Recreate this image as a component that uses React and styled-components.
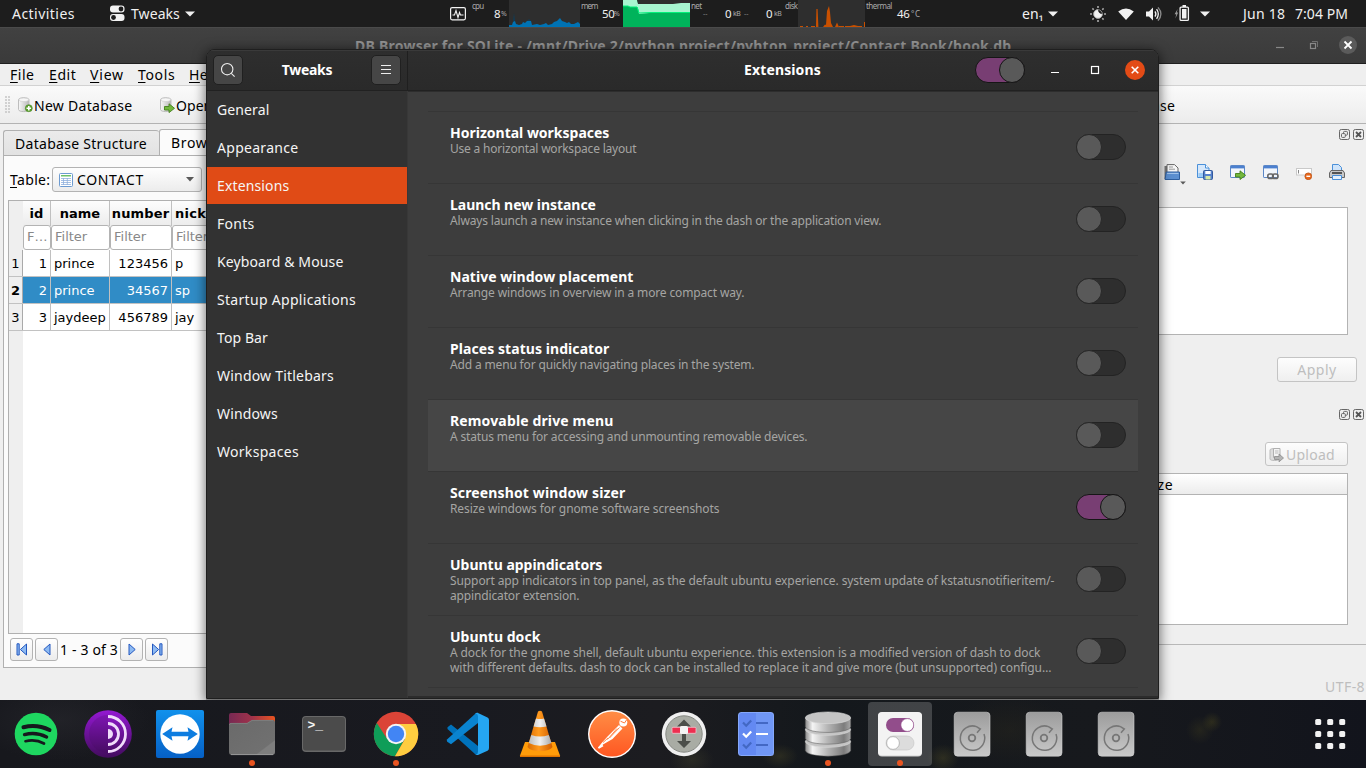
import React, { useLayoutEffect, useRef, useState } from "react";
import styled, { createGlobalStyle, css } from "styled-components";

const UI = '"Noto Sans", "Open Sans", sans-serif';
const GRID = '"DejaVu Sans", sans-serif';

const GlobalStyle = createGlobalStyle`
  *, *::before, *::after { box-sizing: border-box; }
  html, body { margin: 0; padding: 0; background: #16181d; }
  body { font-family: ${UI}; font-size: 14px; overflow: hidden; }
  svg { display: block; flex: none; }
`;

/* Text that is tracked so that it fills a given width. */
const FitSpan = styled.span`
  display: inline-block;
  width: max-content;
  white-space: pre;
  flex: none;
  font-size: ${(p) => p.$size || 14}px;
  font-weight: ${(p) => (p.$bold ? 700 : 400)};
  color: ${(p) => p.$color || "inherit"};
  u { text-decoration-thickness: 1px; text-underline-offset: 2px; text-decoration-skip-ink: none; }
`;

function Fit({ w, size, bold, color, children }) {
  const ref = useRef(null);
  const [track, setTrack] = useState(0);
  useLayoutEffect(() => {
    const el = ref.current;
    el.style.letterSpacing = "0px";
    const natural = el.getBoundingClientRect().width;
    const next = (w + 0.4 - natural) / el.textContent.length;
    el.style.letterSpacing = `${next}px`;
    setTrack(next);
  }, [w]);
  return (
    <FitSpan ref={ref} $size={size} $bold={bold} $color={color} style={{ letterSpacing: track }}>
      {children}
    </FitSpan>
  );
}

const Desktop = styled.div`
  position: relative;
  width: 1366px;
  height: 768px;
  overflow: hidden;
  display: flex;
  flex-direction: column;
`;

/* ---------- top bar ---------- */
const TopBar = styled.header`
  height: 27px;
  flex: none;
  display: flex;
  background: #1d1d1d;
  color: #f0f0f0;
`;
const Slot = styled.div`
  width: ${(p) => p.$w}px;
  flex: none;
  height: 27px;
  display: flex;
  align-items: ${(p) => (p.$top ? "flex-start" : "center")};
  line-height: ${(p) => (p.$top ? 12 : 26)}px;
  white-space: nowrap;
`;
const Caret = () => (
  <svg width="10" height="6" viewBox="0 0 10 6"><path d="M0 .5h10L5 5.5z" fill="#f0f0f0" /></svg>
);

const TweaksGlyph = () => (
  <svg width="15" height="17" viewBox="0 0 15 17">
    <rect x="0" y="0.5" width="14.5" height="7" rx="3" fill="#f2f2f2" />
    <circle cx="11" cy="4" r="2.4" fill="#1d1d1d" />
    <rect x="0" y="9" width="14.5" height="7" rx="3" fill="#f2f2f2" />
    <circle cx="3.5" cy="12.5" r="2.4" fill="#1d1d1d" />
  </svg>
);
const MonitorGlyph = () => (
  <svg width="16" height="14" viewBox="0 0 16 14" fill="none" stroke="#f2f2f2">
    <rect x=".6" y=".6" width="14.8" height="12.2" rx="1.5" strokeWidth="1.2" />
    <path d="M2.5 8H4.5L6 3.5 8 10.5 9.5 5.5 10.5 8H13.5" strokeWidth="1.1" />
  </svg>
);
const CpuGraph = () => (
  <svg width="71" height="27" viewBox="0 0 71 27">
    <path d="M0 0H71V27H0z" fill="#2e2e2e" />
    <path d="M4 27V20L5 13 6 20V27zM18 21L20 19 22 21z" fill="#153a50" />
    <path d="M0 27V25H3L4 22 6 21 7 24 10 25 13 24 14 22 16 23 18 21H22L23 25 28 24 31 25 35 24 37 23 39 25 43 24 45 22 48 21 50 19 51 18 53 21 56 22 58 23 60 22 62 24 65 24 67 23 69 22 71 24V27z" fill="#0072b3" />
  </svg>
);
const MemGraph = () => (
  <svg width="67" height="27" viewBox="0 0 67 27">
    <path d="M0 0H67V27H0z" fill="#00b35b" />
    <path d="M0 0H14L15 3H17L67 3V13H26L16 14 15 8 14 7H7L5 6H0z" fill="#a7f5d0" />
    <path d="M14 0H67V3H58L50 4H18L15 4z" fill="#2e2e2e" />
    <path d="M0 6H5L7 7H14L16 13 28 12.5H67" fill="none" stroke="#00f27a" />
  </svg>
);
const DiskGraph = () => (
  <svg width="67" height="27" viewBox="0 0 67 27">
    <path d="M0 0H67V27H0z" fill="#2e2e2e" />
    <path d="M2 27V26H5V27zM8 27V26H10V27zM13 27V26H17V27zM18 27L18.4 9 19.6 9 20.4 27zM25 27L27 24.5 28 25 29 11 31 6 32 12 33 23 35 27zM37 27L39 22.5 41 27zM41 27V26H46V27zM47 27V26H52L56 25 60 26H64V27zM66 27V22H67V27z" fill="#c95000" />
  </svg>
);
const NightGlyph = () => (
  <svg width="16" height="16" viewBox="0 0 16 16">
    <path d="M8 3.5A4.5 4.5 0 1 0 12.5 8 4.2 4.2 0 0 1 8 3.5z" fill="#f2f2f2" />
    <circle cx="8" cy="8" r="4.3" fill="none" stroke="#aaa" strokeWidth=".8" />
    <path d="M8 0v2M8 14v2M0 8h2M14 8h2M2.4 2.4l1.3 1.3M12.3 12.3l1.3 1.3M13.6 2.4l-1.3 1.3M3.7 12.3l-1.3 1.3" stroke="#aaa" strokeWidth="1.6" />
  </svg>
);
const WifiGlyph = () => (
  <svg width="16" height="12" viewBox="0 0 16 12"><path d="M.2 3.4Q8-2.6 15.8 3.4L8 12z" fill="#f2f2f2" /></svg>
);
const SoundGlyph = () => (
  <svg width="16" height="14" viewBox="0 0 16 14" fill="none" stroke="#f2f2f2" strokeWidth="1.3">
    <path d="M0 4.5H3L7 .5V13.5L3 9.5H0z" fill="#f2f2f2" stroke="none" />
    <path d="M9 4.3Q10.8 7 9 9.7M10.6 2.2Q14 7 10.6 11.8" />
    <path d="M12 .4Q17.8 7 12 13.6" stroke="#8a8a8a" />
  </svg>
);
const BatteryGlyph = () => (
  <svg width="16" height="17" viewBox="0 0 16 17">
    <path d="M3.6 4L.6 9.2H2.2L1.4 13.4 4.2 7.6H2.8z" fill="#9a9a9a" />
    <path d="M8.5 0h3.5v2H8.5z" fill="#f2f2f2" />
    <rect x="6.1" y="2.1" width="8.3" height="13.3" rx="1" fill="none" stroke="#f2f2f2" strokeWidth="1.3" />
    <path d="M8 4h4.5v9.5H8z" fill="#f2f2f2" />
  </svg>
);

const Shell = () => (
  <TopBar>
    <Slot $w={12} />
    <Slot $w={98}><Fit w={62.5}>Activities</Fit></Slot>
    <Slot $w={21}><TweaksGlyph /></Slot>
    <Slot $w={54}><Fit w={48.5}>Tweaks</Fit></Slot>
    <Slot $w={265}><Caret /></Slot>
    <Slot $w={22}><MonitorGlyph /></Slot>
    <Slot $w={22} $top><Fit w={11} size={8} color="#aaa">cpu</Fit></Slot>
    <Slot $w={7}><Fit w={6} size={11.5}>8</Fit></Slot>
    <Slot $w={8}><Fit w={5} size={7} color="#aaa">%</Fit></Slot>
    <Slot $w={72}><CpuGraph /></Slot>
    <Slot $w={21} $top><Fit w={16} size={8} color="#aaa">mem</Fit></Slot>
    <Slot $w={12}><Fit w={12} size={11.5}>50</Fit></Slot>
    <Slot $w={9}><Fit w={5} size={7} color="#aaa">%</Fit></Slot>
    <Slot $w={68}><MemGraph /></Slot>
    <Slot $w={12} $top><Fit w={10} size={8} color="#aaa">net</Fit></Slot>
    <Slot $w={22}><Fit w={4} size={7} color="#888">--</Fit></Slot>
    <Slot $w={8}><Fit w={6} size={11.5}>0</Fit></Slot>
    <Slot $w={11}><Fit w={7} size={7} color="#aaa">kB</Fit></Slot>
    <Slot $w={22}><Fit w={4} size={7} color="#888">--</Fit></Slot>
    <Slot $w={8}><Fit w={6} size={11.5}>0</Fit></Slot>
    <Slot $w={11}><Fit w={7} size={7} color="#aaa">kB</Fit></Slot>
    <Slot $w={13} $top><Fit w={12} size={8} color="#aaa">disk</Fit></Slot>
    <Slot $w={68}><DiskGraph /></Slot>
    <Slot $w={31} $top><Fit w={25.5} size={8} color="#aaa">thermal</Fit></Slot>
    <Slot $w={14}><Fit w={12} size={11.5}>46</Fit></Slot>
    <Slot $w={111}><Fit w={9} size={8} color="#aaa">°C</Fit></Slot>
    <Slot $w={26}><Fit w={21}>en₁</Fit></Slot>
    <Slot $w={42}><Caret /></Slot>
    <Slot $w={28}><NightGlyph /></Slot>
    <Slot $w={28}><WifiGlyph /></Slot>
    <Slot $w={28}><SoundGlyph /></Slot>
    <Slot $w={26}><BatteryGlyph /></Slot>
    <Slot $w={43}><Caret /></Slot>
    <Slot $w={52}><Fit w={42}>Jun 18</Fit></Slot>
    <Slot $w={54}><Fit w={52.5}>7:04 PM</Fit></Slot>
  </TopBar>
);

/* ---------- database browser ---------- */
const DbWindow = styled.section`
  height: 673px;
  flex: none;
  display: flex;
  flex-direction: column;
  background: #efefef;
  color: #000;
`;
const DbTitle = styled.div`
  height: 37px;
  flex: none;
  display: flex;
  align-items: center;
  border-top: 1px solid #4a4a4a;
  border-bottom: 1px solid #1f1f1f;
  background: linear-gradient(#414141, #3a3a3a);
  padding-left: 355px;
`;
const DbControls = styled.div`
  margin: -2px 0 0 auto;
  display: flex;
  align-items: center;
  padding-right: 9px;
`;
const MenuBar = styled.nav`
  height: 22px;
  flex: none;
  display: flex;
  border-bottom: 1px solid #d2d2d2;
  padding-left: 10px;
  line-height: 22px;
`;
const MenuItem = styled.div`
  width: ${(p) => p.$w}px;
  flex: none;
`;
const ToolBar = styled.div`
  height: 38px;
  flex: none;
  display: flex;
  align-items: center;
  border-bottom: 1px solid #b3b3b3;
  background: linear-gradient(#fafafa, #ececec);
`;
const Handle = styled.i`
  width: 5px;
  height: 17px;
  margin: 0 8px 0 5px;
  background: radial-gradient(circle at 1px 1px, #c4c4c4 0.6px, transparent 1px) 0 0 / 3px 3px;
`;
const ToolButton = styled.div`
  display: flex;
  align-items: center;
  gap: 1px;
  width: ${(p) => p.$w}px;
  padding-top: 1px;
`;
const LastTool = styled(ToolButton)`
  width: 896px;
  justify-content: flex-end;
`;
const Body = styled.div`
  height: 544px;
  flex: none;
  display: flex;
`;
const LeftPane = styled.div`
  width: 900px;
  flex: none;
  padding: 5px 0 0 3px;
  display: flex;
  flex-direction: column;
`;
const Tabs = styled.div`
  height: 27px;
  flex: none;
  display: flex;
  align-items: flex-end;
`;
const Tab = styled.div`
  height: ${(p) => (p.$active ? 27 : 26)}px;
  width: ${(p) => (p.$active ? 120 : 156)}px;
  border: 1px solid #b0b0b0;
  border-radius: 3px 3px 0 0;
  ${(p) => p.$active ? css`border-bottom-color: #fbfbfb; background: #fbfbfb;` : css`background: linear-gradient(#ebebeb, #e2e2e2); border-right: 0;`}
  padding: 0 0 0 11px;
  line-height: ${(p) => (p.$active ? 25 : 26)}px;
`;
const Panel = styled.div`
  height: 513px;
  margin-top: -1px;
  border: 1px solid #b0b0b0;
  background: #fbfbfb;
  padding: 11px 0 0 4px;
`;
const PickRow = styled.div`
  display: flex;
  align-items: center;
  height: 25px;
  padding-left: 2px;
  line-height: 20px;
`;
const Combo = styled.div`
  width: 150px;
  height: 25px;
  margin-left: 1.6px;
  border: 1px solid #b3b3b3;
  border-radius: 3px;
  background: linear-gradient(#fefefe, #ececec);
  display: flex;
  align-items: center;
  padding: 0 7px 0 6px;
  gap: 4px;
  svg:last-child { margin-left: auto; }
`;
const Grid = styled.div`
  margin-top: 8px;
  height: 434px;
  border: 1px solid #b0b0b0;
  background: linear-gradient(90deg, #efefef 14px, #fff 14px);
  font-family: ${GRID};
  font-size: 13px;
`;
const GridRow = styled.div`
  display: flex;
  height: ${(p) => p.$h}px;
  background: ${(p) => (p.$selected ? "#308cc6" : "#fff")};
  color: ${(p) => (p.$selected ? "#fff" : "#000")};
  ${(p) => p.$head && css`background: linear-gradient(#fdfdfd, #ececec); font-weight: 700;`}
  ${(p) => p.$line && css`border-bottom: 1px solid #c2c2c2;`}
`;
const Cell = styled.div`
  width: ${(p) => p.$w}px;
  flex: none;
  border-right: 1px solid #c0c0c0;
  display: flex;
  align-items: center;
  justify-content: ${(p) => p.$align || "flex-start"};
  padding: ${(p) => (p.$align === "center" ? "0" : "1px 3px 0")};
  white-space: nowrap;
`;
const LooseCell = styled(Cell)`
  padding-top: 0;
  letter-spacing: 0.3px;
`;
const RowHead = styled(Cell)`
  width: 14px;
  justify-content: center;
  padding: 1px 0 0;
  color: #000;
  background: #efefef;
  font-weight: ${(p) => (p.$bold ? 700 : 400)};
  border-right-color: ${(p) => (p.$plain ? "#efefef" : "#aaa")};
`;
const Filter = styled.div`
  width: ${(p) => p.$w}px;
  flex: none;
  height: 25px;
  margin-top: -1px;
  border: 1px solid #b3b3b3;
  border-radius: 3px;
  background: #fff;
  color: #888;
  padding-left: 3px;
  line-height: 22px;
`;
const Pager = styled.div`
  display: flex;
  align-items: center;
  gap: 2px;
  margin-top: 4px;
  padding-left: 2px;
`;
const PageButton = styled.button`
  width: 23px;
  height: 23px;
  padding: 0;
  border: 1px solid #b3b3b3;
  border-radius: 3px;
  background: linear-gradient(#fff, #ececec);
  display: grid;
  place-items: center;
`;
const RightPane = styled.div`
  width: 466px;
  display: flex;
  flex-direction: column;
`;
const DockTitle = styled.div`
  display: flex;
  justify-content: flex-end;
  gap: 3px;
  padding-right: 2px;
  margin-top: ${(p) => p.$mt}px;
`;
const IconRow = styled.div`
  display: flex;
  justify-content: flex-end;
  gap: 17px;
  padding-right: 21px;
  margin-top: 24px;
  height: 16px;
`;
const EditArea = styled.div`
  margin: 27px 18px 0 0;
  height: 128px;
  border: 1px solid #b3b3b3;
  background: #fff;
`;
const SoftButton = styled.div`
  align-self: flex-end;
  width: ${(p) => p.$w}px;
  height: ${(p) => p.$h}px;
  margin: 22px ${(p) => p.$mr}px 0 0;
  border: 1px solid #c4c4c4;
  border-radius: 3px;
  background: linear-gradient(#fdfdfd, #efefef);
  display: flex;
  align-items: center;
  justify-content: ${(p) => p.$justify || "center"};
  gap: 2px;
  padding: 1px 0 0 ${(p) => (p.$justify ? 3 : 0)}px;
  line-height: 20px;
  color: #bebebe;
`;
const RemoteTable = styled.div`
  margin: 7px 18px 0 0;
  height: 152px;
  border: 1px solid #b3b3b3;
  background: #fff;
`;
const RemoteHead = styled.div`
  height: 21px;
  border-bottom: 1px solid #b3b3b3;
  background: linear-gradient(#fff, #ececec);
  padding-left: 244px;
  line-height: 21px;
`;
const Rule = styled.div`
  margin-top: 19px;
  height: 1px;
  background: #b8b8b8;
`;
const Status = styled.div`
  height: 32px;
  display: flex;
  justify-content: flex-end;
  align-items: center;
  padding: 5px 1px 0 0;
  color: #bebebe;
`;

const Cyl = ({ add }) => (
  <svg width="15" height="16" viewBox="0 0 15 16">
    <defs>
      <linearGradient id="cyl"><stop offset="0" stopColor="#f8f8f8" /><stop offset="1" stopColor="#b8b8b8" /></linearGradient>
    </defs>
    <path d="M.5 2.8C.5 0 11 0 11 2.8V12.5C11 15.3.5 15.3.5 12.5z" fill="url(#cyl)" stroke="#bdbdbd" />
    <ellipse cx="5.8" cy="2.8" rx="4.8" ry="1.8" fill="#f6f6f6" stroke="#ccc" strokeWidth=".6" />
    {add ? (
      <g><circle cx="10.8" cy="11.2" r="3.5" fill="#5aa02c" stroke="#4d8a2a" strokeWidth=".6" /><path d="M10.8 8.9v4.6M8.5 11.2h4.6" stroke="#fff" strokeWidth="1.6" /></g>
    ) : (
      <path d="M4.5 9.5H9V6.8L14.5 11.3 9 15.6V13H4.5z" fill="#73b83e" stroke="#43801c" strokeWidth=".9" />
    )}
  </svg>
);
const TableGlyph = () => (
  <svg width="14" height="14" viewBox="0 0 14 14">
    <rect x=".5" y=".5" width="13" height="13" rx="1" fill="#fff" stroke="#6d9bd1" />
    <path d="M2 2h10v1.5H2z" fill="#6cc06c" />
    <path d="M2 5.5h10M2 7.5h10M2 9.5h10M2 11.5h10M4.5 5v7M8.3 5v7" stroke="#8fb0dd" strokeWidth=".8" />
  </svg>
);
const SmallCaret = () => (
  <svg width="8" height="5" viewBox="0 0 8 5"><path d="M0 0h8L4 4.6z" fill="#5a5a5a" /></svg>
);
const PageGlyph = ({ flip, bar }) => (
  <svg width="12" height="13" viewBox="0 0 12 13">
    <g transform={flip ? "translate(12 0) scale(-1 1)" : undefined} fill="#8dbaf2" stroke="#2458c0">
      {bar ? <path d="M1 .8H3.2V12H1zM10.5 1V12L4.4 6.5z" /> : <path d="M9 1V12L2.8 6.5z" />}
    </g>
  </svg>
);
const FloatGlyph = () => (
  <svg width="11" height="11" viewBox="0 0 11 11" fill="none" stroke="#666">
    <rect x=".5" y=".5" width="10" height="10" rx="1.8" />
    <rect x="4.6" y="2.4" width="3.8" height="3.8" rx=".8" /><rect x="2.5" y="4.6" width="3.8" height="3.8" rx=".8" fill="#efefef" />
  </svg>
);
const CloseGlyph = () => (
  <svg width="11" height="11" viewBox="0 0 11 11" fill="none" stroke="#666">
    <rect x=".5" y=".5" width="10" height="10" rx="1.8" />
    <path d="M3 3L8 8M8 3L3 8" strokeWidth="1.8" stroke="#555" />
  </svg>
);
/* The drop-down mark hangs below the icon's own box. */
const Hanging = styled.svg`
  overflow: visible;
`;
const ImportIcon = () => (
  <Hanging width="16" height="16" viewBox="0 0 16 16">
    <path d="M.5 2H3V15H.5z" fill="#777" />
    <path d="M3 .6H10.5L14 4V9H3z" fill="#f7f7f7" stroke="#666" />
    <path d="M5 3h4M5 5.2h6" stroke="#999" />
    <path d="M2.2 8H15.5V15.5H1z" fill="#5b8fd0" stroke="#2f5f9e" />
    <path d="M3 9.4H14.5" stroke="#a9c9ee" />
    <path d="M16.2 17.5H21.8L19 20.5z" fill="#5a5a5a" />
  </Hanging>
);
const SaveIcon = () => (
  <svg width="16" height="16" viewBox="0 0 16 16">
    <path d="M.5 .5H8.5L12 4V13.5H.5z" fill="#d6e8fb" stroke="#4a90d9" />
    <path d="M8.5 .5V4H12" fill="#fff" stroke="#4a90d9" />
    <path d="M1.5 10h5M1.5 12h5" stroke="#62aef0" />
    <rect x="6.5" y="6.5" width="9" height="9" rx="1" fill="#5682cc" stroke="#33599c" />
    <path d="M8.3 7h5.4v3H8.3z" fill="#fff" /><path d="M8.5 12h5v3.5h-5z" fill="#d6e9a5" />
  </svg>
);
const WindowIcon = ({ link }) => (
  <svg width="16" height="16" viewBox="0 0 16 16">
    <rect x=".5" y="1.5" width="14" height="12" rx=".6" fill="#f2f6fc" stroke="#5b87c7" />
    <path d="M1 2h13v2.4H1z" fill="#4c80cf" />
    {link ? (
      <g fill="none" stroke="#666" strokeWidth="1.6"><rect x="4.8" y="10" width="5.4" height="4.4" rx="2" /><rect x="9.6" y="10" width="5.4" height="4.4" rx="2" /></g>
    ) : (
      <path d="M5.5 9.5H10V6.8L15.6 11.3 10 15.5V13H5.5z" fill="#73b83e" stroke="#43801c" strokeWidth=".9" />
    )}
  </svg>
);
const NullIcon = () => (
  <svg width="16" height="16" viewBox="0 0 16 16">
    <rect x=".5" y="4.5" width="15" height="6.5" fill="#fff" stroke="#c9c9c9" /><path d="M2.5 6v3.5" stroke="#888" />
    <circle cx="12.3" cy="12.3" r="3.4" fill="#e8681c" stroke="#b84a0c" strokeWidth=".7" /><path d="M10.4 12.3h3.8" stroke="#fff" strokeWidth="1.4" />
  </svg>
);
const PrintIcon = () => (
  <svg width="16" height="16" viewBox="0 0 16 16">
    <path d="M3.5 8V.5H9.5L12.5 3.5V8z" fill="#cfe4fa" stroke="#4a90d9" />
    <path d="M2 6.5H14L15.5 9V13.5H.5V9z" fill="#c8c8c8" stroke="#666" />
    <path d="M3 8h10v2H3z" fill="#555" />
    <path d="M3.5 11.5h9v4h-9z" fill="#e5f1fd" stroke="#4a90d9" />
  </svg>
);
const UploadIcon = () => (
  <svg width="15" height="15" viewBox="0 0 15 15">
    <path d="M1 3C1 1 10 1 10 3V12C10 14 1 14 1 12z" fill="#ddd" stroke="#bbb" />
    <path d="M4.5 1.5h6.5v9H4.5z" fill="#f4f4f4" stroke="#b0b0b0" /><path d="M6 4h3.5M6 6h3.5" stroke="#bbb" />
    <path d="M5.5 9.5H10V7L14.5 11 10 14.8V12.5H5.5z" fill="#b4b4b4" stroke="#8c8c8c" strokeWidth=".8" />
  </svg>
);
const DbMin = () => (
  <svg width="64" height="20" viewBox="0 0 64 20" fill="none" stroke="#888">
    <path d="M1 12.5H9" strokeWidth="1.2" />
    <rect x="35.5" y="8.5" width="5" height="5" strokeWidth="1.2" /><path d="M37 6.5H42.5V12" stroke="#707070" />
  </svg>
);
const DbClose = () => (
  <svg width="18" height="18" viewBox="0 0 18 18"><circle cx="9" cy="9" r="9" fill="#5b5b5b" /><path d="M5.5 5.5l7 7M12.5 5.5l-7 7" stroke="#fff" strokeWidth="1.8" /></svg>
);

const records = [
  { n: "1", id: "1", name: "prince", number: "123456", nick: "p" },
  { n: "2", id: "2", name: "prince", number: "34567", nick: "sp", selected: true },
  { n: "3", id: "3", name: "jaydeep", number: "456789", nick: "jay" },
];

const DbBrowser = () => (
  <DbWindow>
    <DbTitle>
      <Fit w={656} bold color="#949494">DB Browser for SQLite - /mnt/Drive 2/python project/pyhton_project/Contact Book/book.db</Fit>
      <DbControls><DbMin /><DbClose /></DbControls>
    </DbTitle>
    <MenuBar>
      <MenuItem $w={39}><Fit w={24}><u>F</u>ile</Fit></MenuItem>
      <MenuItem $w={41}><Fit w={27}><u>E</u>dit</Fit></MenuItem>
      <MenuItem $w={48}><Fit w={33.5}><u>V</u>iew</Fit></MenuItem>
      <MenuItem $w={51}><Fit w={37}><u>T</u>ools</Fit></MenuItem>
      <MenuItem $w={51}><Fit w={32}><u>H</u>elp</Fit></MenuItem>
    </MenuBar>
    <ToolBar>
      <Handle />
      <ToolButton $w={142}><Cyl add /><Fit w={98}>New Database</Fit></ToolButton>
      <ToolButton $w={119}><Cyl /><Fit w={102}>Open Database</Fit></ToolButton>
      <LastTool><Fit w={103}>Close Database</Fit></LastTool>
    </ToolBar>
    <Body>
      <LeftPane>
        <Tabs>
          <Tab><Fit w={131.5}>Database Structure</Fit></Tab>
          <Tab $active><Fit w={90}>Browse Data</Fit></Tab>
        </Tabs>
        <Panel>
          <PickRow>
            <Fit w={40}><u>T</u>able:</Fit>
            <Combo><TableGlyph /><Fit w={66.5}>CONTACT</Fit><SmallCaret /></Combo>
          </PickRow>
          <Grid>
            <GridRow $h={25} $head>
              <RowHead $plain />
              <Cell $w={28} $align="center">id</Cell>
              <Cell $w={59} $align="center">name</Cell>
              <Cell $w={62} $align="center"><Fit w={57} size={13} bold>number</Fit></Cell>
              <LooseCell $w={90}>nickname</LooseCell>
            </GridRow>
            <GridRow $h={24}>
              <RowHead $plain />
              <Filter $w={28}>F…</Filter>
              <Filter $w={59}>Filter</Filter>
              <Filter $w={62}>Filter</Filter>
              <Filter $w={90}>Filter</Filter>
            </GridRow>
            {records.map((r) => (
              <GridRow key={r.n} $h={27} $line $selected={r.selected}>
                <RowHead $bold={r.selected}>{r.n}</RowHead>
                <Cell $w={28} $align="flex-end">{r.id}</Cell>
                <Cell $w={59}>{r.name}</Cell>
                <Cell $w={62} $align="flex-end">{r.number}</Cell>
                <Cell $w={90}>{r.nick}</Cell>
              </GridRow>
            ))}
          </Grid>
          <Pager>
            <PageButton><PageGlyph bar /></PageButton>
            <PageButton><PageGlyph /></PageButton>
            <Fit w={57.6}>1 - 3 of 3</Fit>
            <PageButton><PageGlyph flip /></PageButton>
            <PageButton><PageGlyph flip bar /></PageButton>
          </Pager>
        </Panel>
      </LeftPane>
      <RightPane>
        <DockTitle $mt={5}><FloatGlyph /><CloseGlyph /></DockTitle>
        <IconRow>
          <ImportIcon /><SaveIcon /><WindowIcon /><WindowIcon link /><NullIcon /><PrintIcon />
        </IconRow>
        <EditArea />
        <SoftButton $w={80} $h={25} $mr={9}><Fit w={39}>Apply</Fit></SoftButton>
        <DockTitle $mt={27}><FloatGlyph /><CloseGlyph /></DockTitle>
        <SoftButton $w={83} $h={24} $mr={18} $justify="flex-start"><UploadIcon /><Fit w={48.5}>Upload</Fit></SoftButton>
        <RemoteTable><RemoteHead><Fit w={28}>Size</Fit></RemoteHead></RemoteTable>
        <Rule />
      </RightPane>
    </Body>
    <Status><Fit w={39.5}>UTF-8</Fit></Status>
  </DbWindow>
);

/* ---------- tweaks window ---------- */
const TweaksWindow = styled.section`
  position: absolute;
  left: 206px;
  top: 49px;
  width: 953px;
  height: 650px;
  border: 1px solid #1f1f1f;
  border-radius: 8px 8px 0 0;
  overflow: hidden;
  display: flex;
  flex-direction: column;
  background: #3d3d3d;
  color: #fff;
`;
const TweaksShadow = styled.div`
  position: absolute;
  left: 206px;
  top: 49px;
  width: 953px;
  height: 650px;
  border-radius: 8px 8px 0 0;
  box-shadow: 0 2px 12px 1px rgba(0, 0, 0, 0.55), 0 1px 0 #b0b0b0;
  clip-path: inset(-22px -30px -1px -30px);
`;
const HeaderBar = styled.div`
  height: 41px;
  flex: none;
  display: flex;
  background: linear-gradient(#2e2e2e, #2a2a2a);
  border-top: 1px solid #3a3a3a;
  border-bottom: 1px solid #212121;
`;
const SideHeader = styled.div`
  width: 201px;
  border-right: 1px solid #1f1f1f;
  display: flex;
  align-items: center;
  justify-content: space-between;
  padding: 0 6px 1px 6px;
  line-height: 18px;
`;
const HeadButton = styled.button`
  width: 30px;
  height: 30px;
  padding: 0;
  border: 1px solid #202020;
  border-radius: 5px;
  background: #464646;
  display: grid;
  place-items: center;
`;
const MainHeader = styled.div`
  flex: 1;
  display: flex;
  align-items: center;
  padding: 0 13px 1px 336px;
  line-height: 18px;
`;
const HeadTools = styled.div`
  margin-left: auto;
  display: flex;
  align-items: center;
`;
const Content = styled.div`
  flex: 1;
  display: flex;
`;
const Sidebar = styled.nav`
  width: 201px;
  background: #323232;
  border-right: 1px solid #383838;
`;
const SideItem = styled.div`
  height: ${(p) => (p.$selected ? 37 : 38)}px;
  margin-bottom: ${(p) => (p.$selected ? 1 : 0)}px;
  line-height: 37px;
  padding-left: 10px;
  color: #f5f5f5;
  background: ${(p) => (p.$selected ? "#e04b16" : "transparent")};
`;
const List = styled.div`
  flex: 1;
  padding: 19px 20px 0;
  border-top: 1px solid #2d2d2d;
  border-bottom: 2px solid #2c2c2c;
`;
const ExtRow = styled.div`
  height: 72px;
  border-top: 1px solid #363636;
  background: ${(p) => (p.$hover ? "#464646" : "transparent")};
  display: flex;
  justify-content: space-between;
  padding: 0 12px 0 22px;
`;
const ListEnd = styled.div`
  border-top: 1px solid #363636;
`;
const ExtText = styled.div`
  padding-top: 13px;
  display: flex;
  flex-direction: column;
  line-height: 15px;
`;
const ExtTitle = styled.div`
  height: 16px;
  line-height: 16px;
`;
const Switch = styled.span`
  width: 50px;
  height: 26px;
  margin-top: ${(p) => p.$mt || 0}px;
  flex: none;
  border-radius: 13px;
  border: 1px solid ${(p) => (p.$on ? "#161616" : "#232323")};
  background: ${(p) => (p.$on ? "#783e73" : "#2e2e2e")};
  display: flex;
  justify-content: ${(p) => (p.$on ? "flex-end" : "flex-start")};
  &::after {
    content: "";
    width: 26px;
    height: 26px;
    flex: none;
    margin: -1px;
    border-radius: 50%;
    border: 1px solid ${(p) => (p.$on ? "#161616" : "#282828")};
    background: #595959;
  }
`;
const Gap = styled.i`
  width: 25px;
`;

const sections = [
  ["General", 52], ["Appearance", 81], ["Extensions", 72], ["Fonts", 37], ["Keyboard & Mouse", 126],
  ["Startup Applications", 138.5], ["Top Bar", 50.5], ["Window Titlebars", 116.5], ["Windows", 60.5], ["Workspaces", 81.5],
];
const extensions = [
  { title: ["Horizontal workspaces", 159], text: [["Use a horizontal workspace layout", 186]] },
  { title: ["Launch new instance", 145.5], text: [["Always launch a new instance when clicking in the dash or the application view.", 431]] },
  { title: ["Native window placement", 183], text: [["Arrange windows in overview in a more compact way.", 294]] },
  { title: ["Places status indicator", 159], text: [["Add a menu for quickly navigating places in the system.", 304]] },
  { title: ["Removable drive menu", 163], text: [["A status menu for accessing and unmounting removable devices.", 357]], hover: true },
  { title: ["Screenshot window sizer", 175], text: [["Resize windows for gnome software screenshots", 269]], on: true },
  { title: ["Ubuntu appindicators", 152], text: [["Support app indicators in top panel, as the default ubuntu experience. system update of kstatusnotifieritem/-", 604], ["appindicator extension.", 129]] },
  { title: ["Ubuntu dock", 90], text: [["A dock for the gnome shell, default ubuntu experience. this extension is a modified version of dash to dock", 590], ["with different defaults. dash to dock can be installed to replace it and give more (but unsupported) configu…", 601]] },
];

const SearchGlyph = () => (
  <svg width="16" height="16" viewBox="0 0 16 16" fill="none" stroke="#eee" strokeWidth="1.1"><circle cx="7.2" cy="7.2" r="5.7" /><path d="M11.3 11.3L14.6 14.6" /></svg>
);
const MenuGlyph = () => (
  <svg width="10" height="10" viewBox="0 0 10 10" stroke="#eee"><path d="M0 .5h10M0 4.5h10M0 8.5h10" /></svg>
);
const WindowControls = () => (
  <svg width="95" height="20" viewBox="0 0 95 20" fill="none" stroke="#fff">
    <path d="M1 12.5H9" /><rect x="41.5" y="6.5" width="7" height="7" strokeWidth="1.2" />
    <circle cx="85" cy="10" r="10" fill="#e34b16" stroke="none" /><path d="M81.7 6.7l6.6 6.6M88.3 6.7l-6.6 6.6" strokeWidth="1.6" />
  </svg>
);

const Tweaks = () => (
  <TweaksWindow>
    <HeaderBar>
      <SideHeader>
        <HeadButton><SearchGlyph /></HeadButton>
        <Fit w={50} bold>Tweaks</Fit>
        <HeadButton><MenuGlyph /></HeadButton>
      </SideHeader>
      <MainHeader>
        <Fit w={76.5} bold>Extensions</Fit>
        <HeadTools><Switch $on /><Gap /><WindowControls /></HeadTools>
      </MainHeader>
    </HeaderBar>
    <Content>
      <Sidebar>
        {sections.map(([name, w]) => (
          <SideItem key={name} $selected={name === "Extensions"}><Fit w={w}>{name}</Fit></SideItem>
        ))}
      </Sidebar>
      <List>
        {extensions.map((e) => (
          <ExtRow key={e.title[0]} $hover={e.hover}>
            <ExtText>
              <ExtTitle><Fit w={e.title[1]} bold>{e.title[0]}</Fit></ExtTitle>
              {e.text.map(([line, w]) => <Fit key={line} w={w} size={12} color="#a5a5a3">{line}</Fit>)}
            </ExtText>
            <Switch $on={e.on} $mt={22} />
          </ExtRow>
        ))}
        <ListEnd />
      </List>
    </Content>
  </TweaksWindow>
);

/* ---------- dock ---------- */
const DockBar = styled.footer`
  height: 68px;
  flex: none;
  display: flex;
  background:
    radial-gradient(ellipse 18px 12px at 780px 56px, rgba(90, 85, 40, 0.3), transparent),
    radial-gradient(ellipse 10px 10px at 1212px 22px, rgba(80, 75, 30, 0.4), transparent),
    radial-gradient(ellipse 14px 14px at 1200px 30px, rgba(80, 75, 30, 0.25), transparent),
    radial-gradient(ellipse 22px 16px at 692px 60px, rgba(70, 70, 45, 0.35), transparent),
    radial-gradient(ellipse 16px 14px at 943px 58px, rgba(90, 85, 40, 0.35), transparent),
    radial-gradient(ellipse 60px 34px at 1010px 30px, rgba(45, 42, 30, 0.35), transparent),
    radial-gradient(ellipse 90px 40px at 60px 20px, rgba(40, 40, 46, 0.6), transparent),
    linear-gradient(90deg, #17181d 0, #191a20 35%, #1c1c20 48%, #14181c 60%, #17191d 80%, #12141c 100%);
`;
const DockSlot = styled.div`
  width: 72px;
  flex: none;
  display: flex;
  justify-content: center;
  padding-top: 2px;
`;
const DockTile = styled.div`
  width: 64px;
  height: 64px;
  border-radius: 4px;
  background: ${(p) => (p.$active ? "rgba(255,255,255,.19)" : "transparent")};
  display: flex;
  flex-direction: column;
  align-items: center;
  padding-top: 8px;
`;
const RunDot = styled.i`
  width: 6px;
  height: 6px;
  margin-top: 2px;
  border-radius: 50%;
  background: #e95420;
`;
const AppsSlot = styled(DockSlot)`
  margin-left: auto;
`;

const Icon = ({ children }) => <svg width="48" height="48" viewBox="0 0 48 48">{children}</svg>;

const Spotify = () => (
  <Icon>
    <circle cx="24" cy="24" r="21.3" fill="#1ed760" />
    <g fill="none" stroke="#16181d" strokeLinecap="round">
      <path d="M11.5 17.2Q25 13.8 37.5 20" strokeWidth="4" /><path d="M12.5 24.6Q24 21.5 34.6 27" strokeWidth="3.3" /><path d="M13.5 31.2Q23.5 28.8 32 33.5" strokeWidth="2.7" />
    </g>
  </Icon>
);
const Tor = () => (
  <Icon>
    <defs><linearGradient id="tor" x2="0" y2="1"><stop stopColor="#9418d2" /><stop offset="1" stopColor="#420c5d" /></linearGradient></defs>
    <circle cx="24" cy="24" r="23.8" fill="url(#tor)" />
    <path d="M24 5A19 19 0 0 0 24 43z" fill="#3b0d52" opacity=".18" />
    <g fill="none" stroke="#f0dcfa" strokeWidth="2.8"><path d="M24 6.5A17.5 17.5 0 0 1 24 41.5M24 13.5A10.5 10.5 0 0 1 24 34.5" /></g>
    <path d="M24 19A5 5 0 0 1 24 29z" fill="#f0dcfa" />
  </Icon>
);
const TeamViewer = () => (
  <Icon>
    <defs><linearGradient id="tv" x2="0" y2="1"><stop stopColor="#1191ec" /><stop offset="1" stopColor="#0560c6" /></linearGradient></defs>
    <rect width="48" height="48" rx="2" fill="url(#tv)" /><circle cx="24" cy="24" r="19.7" fill="#fff" />
    <path d="M6.2 24L16.5 17.2L15.5 21.7H32.5L31.5 17.2L41.8 24L31.5 30.8L32.5 26.3H15.5L16.5 30.8z" fill="#0d7de0" />
  </Icon>
);
const Files = () => (
  <Icon>
    <defs>
      <linearGradient id="fld"><stop stopColor="#772953" /><stop offset=".5" stopColor="#a0324a" /><stop offset="1" stopColor="#e95420" /></linearGradient>
      <linearGradient id="fld2" x2="1" y2="1"><stop stopColor="#6a6a6a" /><stop offset=".78" stopColor="#707070" /><stop offset=".8" stopColor="#7e7e7e" /></linearGradient>
    </defs>
    <path d="M1 5Q1 3 3 3H19L23 6H45Q47 6 47 8V20H1z" fill="url(#fld)" />
    <path d="M1 15Q1 13 3 13H19L24 10H45Q47 10 47 12V42Q47 45 44 45H4Q1 45 1 42z" fill="url(#fld2)" />
    <path d="M1.5 15Q1.5 13.4 3 13.4H19.2L24 10.4H45" fill="none" stroke="#8a8a8a" strokeWidth=".6" />
    <path d="M3 44.6H45" stroke="#999" />
  </Icon>
);
const PromptText = styled.text`
  font: 700 13px "Liberation Mono", monospace;
  fill: #f5f5f5;
`;
const Terminal = () => (
  <Icon>
    <rect x="2" y="6" width="44" height="36" rx="4" fill="#686868" /><rect x="3" y="7" width="42" height="33.5" rx="3" fill="#4b4b4b" />
    <PromptText x="7.5" y="18.5">&gt;_</PromptText>
  </Icon>
);
const Chrome = () => (
  <Icon>
    <circle cx="24" cy="24" r="22.2" fill="#db4437" />
    <path d="M4.8 12.9A22.2 22.2 0 0 0 23 46.2L32.8 29H15.2z" fill="#0f9d58" />
    <path d="M33 29L23 46.2A22.2 22.2 0 0 0 43.8 13.9H24z" fill="#ffcd40" />
    <circle cx="24" cy="24" r="10.2" fill="#f4f4f4" /><circle cx="24" cy="24" r="8.2" fill="#4285f4" />
  </Icon>
);
const Code = () => (
  <Icon>
    <path d="M3.5 17.2L7 14.6 34 36V45L33 45Q32 45 31 44L3.5 19z" fill="#0072bb" />
    <path d="M3 29.5L31 4Q33 2.4 34 3V13L7 34.3 3.2 31.8Q2.5 30.5 3 29.5z" fill="#0a84d0" />
    <path d="M34 3L43.5 7.5Q45 8.2 45 10V38Q45 40 43.5 40.7L34 45Q32.5 45.4 31 44Q34 45 34 41.5V6.5Q34 3 31 4Q32.5 2.4 34 3z" fill="#25a6f2" />
  </Icon>
);
const Vlc = () => (
  <Icon>
    <defs>
      <linearGradient id="vo"><stop stopColor="#d96a00" /><stop offset=".45" stopColor="#ff9a1e" /><stop offset="1" stopColor="#d05c00" /></linearGradient>
      <linearGradient id="vw"><stop stopColor="#bcbcbc" /><stop offset=".5" stopColor="#f0f0f0" /><stop offset="1" stopColor="#aaa" /></linearGradient>
    </defs>
    <path d="M9 32H39L44 45.5V47H4V45.5z" fill="#ff9c0a" /><path d="M4 45.5H44V47H4z" fill="#e07400" />
    <path d="M22 1.5Q24 0 26 1.5L36.5 37Q34 41 24 41T11.5 37z" fill="url(#vo)" />
    <path d="M20 8.5Q24 9.5 28 8.5L30.5 16.5Q24 18 17.6 16.5zM15.3 25Q24 28 32.8 25L35.5 33Q24 38.5 12.8 33z" fill="url(#vw)" />
  </Icon>
);
const Postman = () => (
  <Icon>
    <defs><linearGradient id="pm" x2="0" y2="1"><stop stopColor="#ff8d45" /><stop offset="1" stopColor="#ff5722" /></linearGradient></defs>
    <circle cx="24" cy="24" r="24" fill="#fff" /><circle cx="24" cy="24" r="22.6" fill="url(#pm)" />
    <circle cx="35.3" cy="12.5" r="4" fill="#fff" /><path d="M32.5 11.2L36.5 13 38.5 10" fill="none" stroke="#ff7a3a" />
    <path d="M31 15L34.5 18.5 24.5 29 15 34.5 11 38.5 10 37.5 14.5 32 20 26z" fill="#fff" />
    <path d="M21.5 28L31.5 17.5M19.5 29.5L29 18.5M15 32.5L20 28" stroke="#ff7a3a" strokeWidth=".9" />
    <path d="M10.5 38L15 35.5" stroke="#fff" strokeWidth="1.8" />
  </Icon>
);
const Gauge = () => (
  <Icon>
    <circle cx="24" cy="24" r="22.2" fill="#efefef" /><circle cx="24" cy="24" r="18.2" fill="#a9aca4" stroke="#868983" />
    <path d="M24 9.5L31 16.5H26V31H31L24 38 17 31H22V16.5H17z" fill="#4c4f4a" />
    <rect x="12" y="17.3" width="24" height="6" rx="1" fill="#ee2f50" stroke="#f3c7cf" strokeWidth=".8" /><rect x="20" y="16" width="8" height="8" rx="1.5" fill="#f4f4f4" />
  </Icon>
);
const Todo = () => (
  <Icon>
    <rect x="6" y="2" width="36" height="44" rx="3.5" fill="#85a8fb" /><path d="M9.5 3H24V45H9.5Q7 45 7 42.5V5.5Q7 3 9.5 3z" fill="#6389f2" /><path d="M24 3H38.5Q41 3 41 5.5V42.5Q41 45 38.5 45H24z" fill="#7097f5" />
    <g fill="none" strokeWidth="2.2">
      <path d="M11 12.5L14.2 15.7 19.2 10.5M11 34.5L14.2 37.7 19.2 32.5M24 13H36M24 35H36" stroke="#4368c4" /><path d="M11 23.5L14.2 26.7 19.2 21.5M24 24H36" stroke="#fff" />
    </g>
  </Icon>
);
const Database = () => (
  <Icon>
    <defs><linearGradient id="dbg"><stop stopColor="#8a8a8a" /><stop offset=".16" stopColor="#f4f4f4" /><stop offset=".5" stopColor="#b4b4b4" /><stop offset=".85" stopColor="#7c7c7c" /><stop offset="1" stopColor="#a8a8a8" /></linearGradient></defs>
    {[31.5, 19.5, 7.8].map((y) => (
      <g key={y}>
        <path d={`M1.3 ${y}V${y + 9}C3 ${y + 16.5} 45 ${y + 16.5} 46.7 ${y + 9}V${y}z`} fill="url(#dbg)" stroke="#555" strokeWidth=".5" />
        <ellipse cx="24" cy={y} rx="22.6" ry="5.8" fill="#c4c4c4" stroke="#dcdcdc" strokeWidth=".6" />
      </g>
    ))}
  </Icon>
);
const TweaksApp = () => (
  <Icon>
    <rect x="2" y="2.5" width="44" height="44" rx="4" fill="#d2d2d2" /><rect x="2" y="2" width="44" height="43.4" rx="4" fill="#f3f3f3" />
    <rect x="10" y="8" width="28" height="14" rx="7" fill="#924d8b" /><circle cx="31.3" cy="15" r="6.4" fill="#fff" stroke="#924d8b" strokeWidth=".6" />
    <rect x="10" y="26" width="28" height="14" rx="7" fill="#dcdcdc" stroke="#c4c4c4" strokeWidth=".6" /><circle cx="17" cy="33" r="6.4" fill="#fff" stroke="#aaa" strokeWidth=".8" />
  </Icon>
);
const Drive = () => (
  <Icon>
    <defs><linearGradient id="drv" x2="0" y2="1"><stop stopColor="#9c9c9c" /><stop offset="1" stopColor="#c9c9c9" /></linearGradient></defs>
    <rect x="6.2" y="2.2" width="35.8" height="44" rx="3.5" fill="url(#drv)" stroke="#d0d0d0" strokeWidth=".6" />
    <g fill="none" stroke="#777" strokeWidth="1.5"><path d="M29 22.8L32.3 19L28.5 16.6A12.2 12.2 0 1 0 36 24" /><circle cx="24" cy="28" r="3.3" strokeWidth="1.8" /></g>
  </Icon>
);
const AppsGrid = () => (
  <Icon>
    {[10, 22, 34].map((x) => [9, 21, 33].map((y) => <rect key={`${x}-${y}`} x={x - 0.8} y={y} width="6" height="6" rx="1.6" fill="#f2f2f2" />))}
  </Icon>
);

const apps = [
  [Spotify], [Tor], [TeamViewer], [Files, true], [Terminal], [Chrome, true], [Code], [Vlc], [Postman],
  [Gauge], [Todo], [Database, true], [TweaksApp, true, true], [Drive], [Drive], [Drive],
];

export default function App() {
  return (
    <Desktop>
      <GlobalStyle />
      <Shell />
      <DbBrowser />
      <DockBar>
        {apps.map(([Glyph, running, active], i) => (
          <DockSlot key={i}><DockTile $active={active}><Glyph />{running && <RunDot />}</DockTile></DockSlot>
        ))}
        <AppsSlot><DockTile><AppsGrid /></DockTile></AppsSlot>
      </DockBar>
      <TweaksShadow />
      <Tweaks />
    </Desktop>
  );
}
